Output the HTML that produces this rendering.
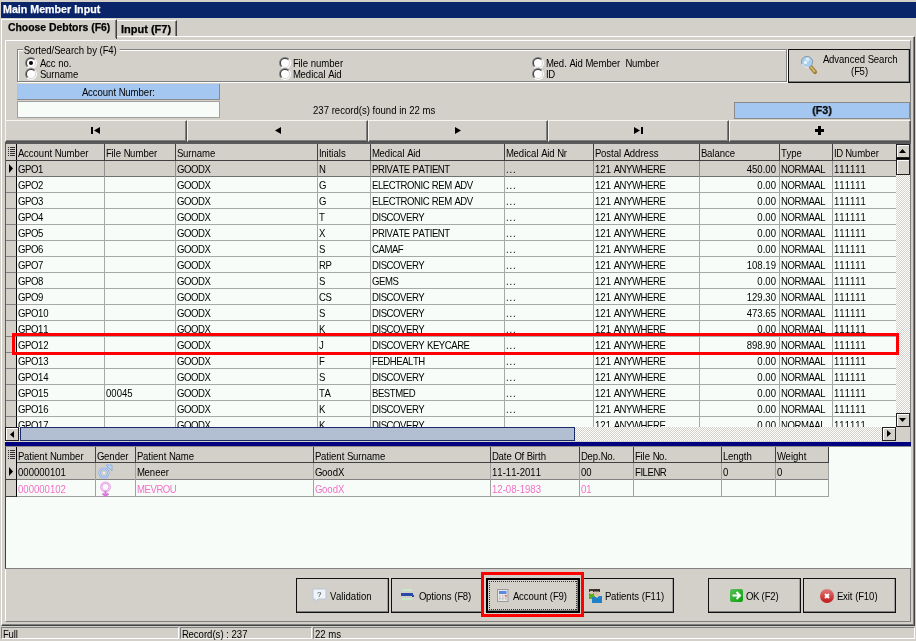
<!DOCTYPE html>
<html><head><meta charset="utf-8"><style>
html,body{margin:0;padding:0;}
body{width:916px;height:641px;overflow:hidden;position:relative;background:#D2D0C8;font-family:"Liberation Sans", sans-serif;font-size:11px;color:#000;font-kerning:none;will-change:transform;}
div,.t,svg{position:absolute;}
.u{font-style:normal;letter-spacing:-0.52px;}
.d{font-style:normal;letter-spacing:1px;}
.t{white-space:pre;line-height:13px;transform:scaleX(0.87);transform-origin:0 0;}
.b{font-weight:bold;transform:scaleX(0.97);-webkit-text-stroke:0.25px currentColor;}
.c{transform-origin:50% 0;}
.r{transform-origin:100% 0;}
</style></head><body>
<div style="left:1px;top:2px;width:915px;height:16px;background:#0A246A;"></div><span class="t b" style="left:3px;top:3px;color:#fff;">Main Member Input</span><div style="left:1px;top:36px;width:914px;height:590px;border-top:1px solid #fff;border-left:1px solid #fff;border-right:1px solid #404040;border-bottom:1px solid #404040;box-sizing:border-box;"></div><div style="left:2px;top:37px;width:912px;height:588px;border-right:1px solid #808080;border-bottom:1px solid #808080;box-sizing:border-box;"></div><div style="left:1px;top:19px;width:116px;height:20px;background:#D2D0C8;border-top:1px solid #fff;border-left:1px solid #fff;border-right:1px solid #404040;box-sizing:border-box;"></div><div style="left:115px;top:20px;width:1px;height:18px;background:#808080;"></div><span class="t b" style="left:8px;top:21px;transform:scaleX(0.945);">Choose Debtors (F6)</span><div style="left:117px;top:20px;width:60px;height:16px;background:#D2D0C8;border-top:1px solid #fff;border-right:1px solid #404040;box-sizing:border-box;"></div><div style="left:175px;top:21px;width:1px;height:15px;background:#808080;"></div><span class="t b" style="left:121px;top:23px;transform:scaleX(1.0);">Input (F7)</span><div style="left:5px;top:40px;width:906px;height:582px;border-top:1px solid #fff;border-left:1px solid #fff;border-right:1px solid #808080;border-bottom:1px solid #808080;box-sizing:border-box;"></div><div style="left:17px;top:49px;width:770px;height:33px;border:1px solid #808080;box-shadow:inset 1px 1px 0 #fff, 1px 1px 0 #fff;box-sizing:border-box;"></div><span class="t " style="left:23px;top:44px;background:#D2D0C8;padding-left:1px;"><i class="u">S</i>orted/<i class="u">S</i>earch by (<i class="u">F</i>4) </span><div style="left:25px;top:57px;width:12px;height:12px;border-radius:6px;background:linear-gradient(135deg,#808080 0%,#808080 45%,#fff 55%,#fff 100%);"><div style="left:1px;top:1px;width:10px;height:10px;border-radius:5px;background:linear-gradient(135deg,#404040 0%,#404040 45%,#D2D0C8 55%,#D2D0C8 100%);"><div style="left:1px;top:1px;width:8px;height:8px;border-radius:4px;background:#fff;"><div style="left:2px;top:2px;width:4px;height:4px;border-radius:2px;background:#000;"></div></div></div></div><span class="t " style="left:40px;top:57px;"><i class="u">A</i>cc no.</span><div style="left:25px;top:68px;width:12px;height:12px;border-radius:6px;background:linear-gradient(135deg,#808080 0%,#808080 45%,#fff 55%,#fff 100%);"><div style="left:1px;top:1px;width:10px;height:10px;border-radius:5px;background:linear-gradient(135deg,#404040 0%,#404040 45%,#D2D0C8 55%,#D2D0C8 100%);"><div style="left:1px;top:1px;width:8px;height:8px;border-radius:4px;background:#fff;"></div></div></div><span class="t " style="left:40px;top:68px;"><i class="u">S</i>urname</span><div style="left:279px;top:57px;width:12px;height:12px;border-radius:6px;background:linear-gradient(135deg,#808080 0%,#808080 45%,#fff 55%,#fff 100%);"><div style="left:1px;top:1px;width:10px;height:10px;border-radius:5px;background:linear-gradient(135deg,#404040 0%,#404040 45%,#D2D0C8 55%,#D2D0C8 100%);"><div style="left:1px;top:1px;width:8px;height:8px;border-radius:4px;background:#fff;"></div></div></div><span class="t " style="left:293px;top:57px;"><i class="u">F</i>ile number</span><div style="left:279px;top:68px;width:12px;height:12px;border-radius:6px;background:linear-gradient(135deg,#808080 0%,#808080 45%,#fff 55%,#fff 100%);"><div style="left:1px;top:1px;width:10px;height:10px;border-radius:5px;background:linear-gradient(135deg,#404040 0%,#404040 45%,#D2D0C8 55%,#D2D0C8 100%);"><div style="left:1px;top:1px;width:8px;height:8px;border-radius:4px;background:#fff;"></div></div></div><span class="t " style="left:293px;top:68px;"><i class="u">M</i>edical <i class="u">A</i>id</span><div style="left:532px;top:57px;width:12px;height:12px;border-radius:6px;background:linear-gradient(135deg,#808080 0%,#808080 45%,#fff 55%,#fff 100%);"><div style="left:1px;top:1px;width:10px;height:10px;border-radius:5px;background:linear-gradient(135deg,#404040 0%,#404040 45%,#D2D0C8 55%,#D2D0C8 100%);"><div style="left:1px;top:1px;width:8px;height:8px;border-radius:4px;background:#fff;"></div></div></div><span class="t " style="left:546px;top:57px;"><i class="u">M</i>ed. <i class="u">A</i>id <i class="u">M</i>ember&nbsp; <i class="u">N</i>umber</span><div style="left:532px;top:68px;width:12px;height:12px;border-radius:6px;background:linear-gradient(135deg,#808080 0%,#808080 45%,#fff 55%,#fff 100%);"><div style="left:1px;top:1px;width:10px;height:10px;border-radius:5px;background:linear-gradient(135deg,#404040 0%,#404040 45%,#D2D0C8 55%,#D2D0C8 100%);"><div style="left:1px;top:1px;width:8px;height:8px;border-radius:4px;background:#fff;"></div></div></div><span class="t " style="left:546px;top:68px;"><i class="u">ID</i></span><div style="left:788px;top:49px;width:122px;height:34px;background:#D2D0C8;border:1px solid #101010;box-shadow:inset 0 -1px 0 #808080, inset -1px 0 0 #a0a0a0;box-sizing:border-box;"></div><svg style="position:absolute;left:800px;top:55px" width="18" height="20" viewBox="0 0 18 20"><line x1="10" y1="11" x2="15" y2="17" stroke="#a08030" stroke-width="4.2" stroke-linecap="round"/><line x1="10" y1="11" x2="15" y2="17" stroke="#d8c080" stroke-width="1.6" stroke-linecap="round" stroke-dasharray="1 1"/><circle cx="7" cy="7" r="5.6" fill="#a8d0ec" stroke="#8a9aa8" stroke-width="1"/><path d="M2 9 A5.6 5.6 0 0 0 9 12.3" stroke="#e8e8e8" stroke-width="1.2" fill="none"/><circle cx="5.5" cy="7.5" r="1.6" fill="#f0f8ff"/><circle cx="7.5" cy="4.5" r="2" fill="#d8ecf8"/></svg><span class="t " style="left:823px;top:53px;"><i class="u">A</i>dvanced <i class="u">S</i>earch</span><span class="t " style="left:851px;top:65px;">(<i class="u">F</i>5)</span><div style="left:17px;top:84px;width:203px;height:16px;background:#A3C7F0;border-right:1px solid #8a8a8a;border-bottom:1px solid #8a8a8a;box-sizing:border-box;"></div><span class="t c" style="left:17px;top:86px;width:203px;text-align:center;"><i class="u">A</i>ccount <i class="u">N</i>umber:</span><div style="left:17px;top:101px;width:203px;height:17px;background:#F8FCF8;border:1px solid #a0a0a0;box-sizing:border-box;"></div><span class="t " style="left:313px;top:104px;">237 record(s) found in 22 ms</span><div style="left:734px;top:102px;width:176px;height:17px;background:#A3C7F0;border:1px solid #8a8a8a;box-sizing:border-box;"></div><span class="t b c" style="left:734px;top:104px;width:176px;text-align:center;">(F3)</span><div style="left:5px;top:120px;width:182px;height:22px;background:#D2D0C8;border-top:1px solid #f4f4f0;border-left:1px solid #f4f4f0;border-right:1px solid #505050;border-bottom:1px solid #505050;box-sizing:border-box;"><div style="left:0;top:0;width:180px;height:20px;border-right:1px solid #808080;border-bottom:1px solid #808080;box-sizing:border-box;"></div></div><div style="left:187px;top:120px;width:181px;height:22px;background:#D2D0C8;border-top:1px solid #f4f4f0;border-left:1px solid #f4f4f0;border-right:1px solid #505050;border-bottom:1px solid #505050;box-sizing:border-box;"><div style="left:0;top:0;width:179px;height:20px;border-right:1px solid #808080;border-bottom:1px solid #808080;box-sizing:border-box;"></div></div><div style="left:368px;top:120px;width:180px;height:22px;background:#D2D0C8;border-top:1px solid #f4f4f0;border-left:1px solid #f4f4f0;border-right:1px solid #505050;border-bottom:1px solid #505050;box-sizing:border-box;"><div style="left:0;top:0;width:178px;height:20px;border-right:1px solid #808080;border-bottom:1px solid #808080;box-sizing:border-box;"></div></div><div style="left:548px;top:120px;width:181px;height:22px;background:#D2D0C8;border-top:1px solid #f4f4f0;border-left:1px solid #f4f4f0;border-right:1px solid #505050;border-bottom:1px solid #505050;box-sizing:border-box;"><div style="left:0;top:0;width:179px;height:20px;border-right:1px solid #808080;border-bottom:1px solid #808080;box-sizing:border-box;"></div></div><div style="left:729px;top:120px;width:182px;height:22px;background:#D2D0C8;border-top:1px solid #f4f4f0;border-left:1px solid #f4f4f0;border-right:1px solid #505050;border-bottom:1px solid #505050;box-sizing:border-box;"><div style="left:0;top:0;width:180px;height:20px;border-right:1px solid #808080;border-bottom:1px solid #808080;box-sizing:border-box;"></div></div><svg style="position:absolute;left:91px;top:127px" width="10" height="8"><rect x="0" y="0" width="2" height="7" fill="#000"/><path d="M9 0 L3 3.5 L9 7 Z" fill="#000"/></svg><svg style="position:absolute;left:274px;top:127px" width="8" height="8"><path d="M7 0 L1 3.5 L7 7 Z" fill="#000"/></svg><svg style="position:absolute;left:454px;top:127px" width="8" height="8"><path d="M1 0 L7 3.5 L1 7 Z" fill="#000"/></svg><svg style="position:absolute;left:634px;top:127px" width="10" height="8"><path d="M0 0 L6 3.5 L0 7 Z" fill="#000"/><rect x="7" y="0" width="2" height="7" fill="#000"/></svg><svg style="position:absolute;left:815px;top:126px" width="9" height="9"><rect x="3" y="0" width="3" height="9" fill="#000"/><rect x="0" y="3" width="9" height="3" fill="#000"/></svg><div style="left:5px;top:142px;width:906px;height:2px;background:#5a5a5a;"></div><div style="left:5px;top:142px;width:1px;height:299px;background:#5a5a5a;"></div><div style="left:6px;top:144px;width:890px;height:283px;overflow:hidden;background:#F8FCF8;"><div style="left:0;top:0;width:891px;height:16px;background:#D2D0C8;border-bottom:2px solid #404040;box-sizing:content-box;"></div><div style="left:0;top:0;width:11px;height:16px;background:#D2D0C8;border-right:1px solid #000;box-sizing:border-box;"></div><svg style="position:absolute;left:2px;top:3px" width="8" height="10"><g fill="#303030"><rect x="0" y="0" width="1" height="1"/><rect x="2" y="0" width="5" height="1"/><rect x="0" y="2" width="1" height="1"/><rect x="2" y="2" width="5" height="1"/><rect x="0" y="4" width="1" height="1"/><rect x="2" y="4" width="5" height="1"/><rect x="0" y="6" width="1" height="1"/><rect x="2" y="6" width="5" height="1"/><rect x="0" y="8" width="1" height="1"/><rect x="2" y="8" width="5" height="1"/></g></svg><div style="left:10px;top:0;width:89px;height:16px;border-right:1px solid #404040;box-sizing:border-box;"></div><span class="t" style="left:12px;top:3px;"><i class="u">A</i>ccount <i class="u">N</i>umber</span><div style="left:98px;top:0;width:72px;height:16px;border-right:1px solid #404040;box-sizing:border-box;"></div><span class="t" style="left:100px;top:3px;"><i class="u">F</i>ile <i class="u">N</i>umber</span><div style="left:169px;top:0;width:143px;height:16px;border-right:1px solid #404040;box-sizing:border-box;"></div><span class="t" style="left:171px;top:3px;"><i class="u">S</i>urname</span><div style="left:311px;top:0;width:54px;height:16px;border-right:1px solid #404040;box-sizing:border-box;"></div><span class="t" style="left:313px;top:3px;"><i class="u">I</i>nitials</span><div style="left:364px;top:0;width:135px;height:16px;border-right:1px solid #404040;box-sizing:border-box;"></div><span class="t" style="left:366px;top:3px;"><i class="u">M</i>edical <i class="u">A</i>id</span><div style="left:498px;top:0;width:90px;height:16px;border-right:1px solid #404040;box-sizing:border-box;"></div><span class="t" style="left:500px;top:3px;"><i class="u">M</i>edical <i class="u">A</i>id <i class="u">N</i>r</span><div style="left:587px;top:0;width:107px;height:16px;border-right:1px solid #404040;box-sizing:border-box;"></div><span class="t" style="left:589px;top:3px;"><i class="u">P</i>ostal <i class="u">A</i>ddress</span><div style="left:693px;top:0;width:81px;height:16px;border-right:1px solid #404040;box-sizing:border-box;"></div><span class="t" style="left:695px;top:3px;"><i class="u">B</i>alance</span><div style="left:773px;top:0;width:54px;height:16px;border-right:1px solid #404040;box-sizing:border-box;"></div><span class="t" style="left:775px;top:3px;"><i class="u">T</i>ype</span><div style="left:826px;top:0;width:65px;height:16px;border-right:1px solid #404040;box-sizing:border-box;"></div><span class="t" style="left:828px;top:3px;"><i class="u">ID</i> <i class="u">N</i>umber</span><div style="left:10px;top:17px;width:880px;height:16px;background:#D2D0C8;border-bottom:1px solid #707070;box-sizing:border-box;"></div><div style="left:0;top:17px;width:11px;height:16px;background:#D2D0C8;border-right:1px solid #000;border-bottom:1px solid #808080;box-sizing:border-box;"></div><svg style="position:absolute;left:2px;top:20px" width="6" height="10"><path d="M1 0 L5 4.5 L1 9 Z" fill="#000"/></svg><div style="left:10px;top:17px;width:89px;height:16px;border-right:1px solid #909090;box-sizing:border-box;"></div><span class="t" style="left:12px;top:19px;"><i class="u">GPO</i>1</span><div style="left:98px;top:17px;width:72px;height:16px;border-right:1px solid #909090;box-sizing:border-box;"></div><div style="left:169px;top:17px;width:143px;height:16px;border-right:1px solid #909090;box-sizing:border-box;"></div><span class="t" style="left:171px;top:19px;"><i class="u">GOODX</i></span><div style="left:311px;top:17px;width:54px;height:16px;border-right:1px solid #909090;box-sizing:border-box;"></div><span class="t" style="left:313px;top:19px;"><i class="u">N</i></span><div style="left:364px;top:17px;width:135px;height:16px;border-right:1px solid #909090;box-sizing:border-box;"></div><span class="t" style="left:366px;top:19px;"><i class="u">PRIVATE</i> <i class="u">PATIENT</i></span><div style="left:498px;top:17px;width:90px;height:16px;border-right:1px solid #909090;box-sizing:border-box;"></div><span class="t" style="left:500px;top:19px;"><i class="d">...</i></span><div style="left:587px;top:17px;width:107px;height:16px;border-right:1px solid #909090;box-sizing:border-box;"></div><span class="t" style="left:589px;top:19px;">121 <i class="u">ANYWHERE</i></span><div style="left:693px;top:17px;width:81px;height:16px;border-right:1px solid #909090;box-sizing:border-box;"></div><span class="t r" style="left:693px;top:19px;width:77px;text-align:right;">450.00</span><div style="left:773px;top:17px;width:54px;height:16px;border-right:1px solid #909090;box-sizing:border-box;"></div><span class="t" style="left:775px;top:19px;"><i class="u">NORMAAL</i></span><div style="left:826px;top:17px;width:65px;height:16px;border-right:1px solid #909090;box-sizing:border-box;"></div><span class="t" style="left:828px;top:19px;">111111</span><div style="left:10px;top:33px;width:880px;height:16px;background:#F8FCF8;border-bottom:1px solid #A8A8A8;box-sizing:border-box;"></div><div style="left:0;top:33px;width:11px;height:16px;background:#D2D0C8;border-right:1px solid #000;border-bottom:1px solid #808080;box-sizing:border-box;"></div><div style="left:10px;top:33px;width:89px;height:16px;border-right:1px solid #A8A8A8;box-sizing:border-box;"></div><span class="t" style="left:12px;top:35px;"><i class="u">GPO</i>2</span><div style="left:98px;top:33px;width:72px;height:16px;border-right:1px solid #A8A8A8;box-sizing:border-box;"></div><div style="left:169px;top:33px;width:143px;height:16px;border-right:1px solid #A8A8A8;box-sizing:border-box;"></div><span class="t" style="left:171px;top:35px;"><i class="u">GOODX</i></span><div style="left:311px;top:33px;width:54px;height:16px;border-right:1px solid #A8A8A8;box-sizing:border-box;"></div><span class="t" style="left:313px;top:35px;"><i class="u">G</i></span><div style="left:364px;top:33px;width:135px;height:16px;border-right:1px solid #A8A8A8;box-sizing:border-box;"></div><span class="t" style="left:366px;top:35px;"><i class="u">ELECTRONIC</i> <i class="u">REM</i> <i class="u">ADV</i></span><div style="left:498px;top:33px;width:90px;height:16px;border-right:1px solid #A8A8A8;box-sizing:border-box;"></div><span class="t" style="left:500px;top:35px;"><i class="d">...</i></span><div style="left:587px;top:33px;width:107px;height:16px;border-right:1px solid #A8A8A8;box-sizing:border-box;"></div><span class="t" style="left:589px;top:35px;">121 <i class="u">ANYWHERE</i></span><div style="left:693px;top:33px;width:81px;height:16px;border-right:1px solid #A8A8A8;box-sizing:border-box;"></div><span class="t r" style="left:693px;top:35px;width:77px;text-align:right;">0.00</span><div style="left:773px;top:33px;width:54px;height:16px;border-right:1px solid #A8A8A8;box-sizing:border-box;"></div><span class="t" style="left:775px;top:35px;"><i class="u">NORMAAL</i></span><div style="left:826px;top:33px;width:65px;height:16px;border-right:1px solid #A8A8A8;box-sizing:border-box;"></div><span class="t" style="left:828px;top:35px;">111111</span><div style="left:10px;top:49px;width:880px;height:16px;background:#F8FCF8;border-bottom:1px solid #A8A8A8;box-sizing:border-box;"></div><div style="left:0;top:49px;width:11px;height:16px;background:#D2D0C8;border-right:1px solid #000;border-bottom:1px solid #808080;box-sizing:border-box;"></div><div style="left:10px;top:49px;width:89px;height:16px;border-right:1px solid #A8A8A8;box-sizing:border-box;"></div><span class="t" style="left:12px;top:51px;"><i class="u">GPO</i>3</span><div style="left:98px;top:49px;width:72px;height:16px;border-right:1px solid #A8A8A8;box-sizing:border-box;"></div><div style="left:169px;top:49px;width:143px;height:16px;border-right:1px solid #A8A8A8;box-sizing:border-box;"></div><span class="t" style="left:171px;top:51px;"><i class="u">GOODX</i></span><div style="left:311px;top:49px;width:54px;height:16px;border-right:1px solid #A8A8A8;box-sizing:border-box;"></div><span class="t" style="left:313px;top:51px;"><i class="u">G</i></span><div style="left:364px;top:49px;width:135px;height:16px;border-right:1px solid #A8A8A8;box-sizing:border-box;"></div><span class="t" style="left:366px;top:51px;"><i class="u">ELECTRONIC</i> <i class="u">REM</i> <i class="u">ADV</i></span><div style="left:498px;top:49px;width:90px;height:16px;border-right:1px solid #A8A8A8;box-sizing:border-box;"></div><span class="t" style="left:500px;top:51px;"><i class="d">...</i></span><div style="left:587px;top:49px;width:107px;height:16px;border-right:1px solid #A8A8A8;box-sizing:border-box;"></div><span class="t" style="left:589px;top:51px;">121 <i class="u">ANYWHERE</i></span><div style="left:693px;top:49px;width:81px;height:16px;border-right:1px solid #A8A8A8;box-sizing:border-box;"></div><span class="t r" style="left:693px;top:51px;width:77px;text-align:right;">0.00</span><div style="left:773px;top:49px;width:54px;height:16px;border-right:1px solid #A8A8A8;box-sizing:border-box;"></div><span class="t" style="left:775px;top:51px;"><i class="u">NORMAAL</i></span><div style="left:826px;top:49px;width:65px;height:16px;border-right:1px solid #A8A8A8;box-sizing:border-box;"></div><span class="t" style="left:828px;top:51px;">111111</span><div style="left:10px;top:65px;width:880px;height:16px;background:#F8FCF8;border-bottom:1px solid #A8A8A8;box-sizing:border-box;"></div><div style="left:0;top:65px;width:11px;height:16px;background:#D2D0C8;border-right:1px solid #000;border-bottom:1px solid #808080;box-sizing:border-box;"></div><div style="left:10px;top:65px;width:89px;height:16px;border-right:1px solid #A8A8A8;box-sizing:border-box;"></div><span class="t" style="left:12px;top:67px;"><i class="u">GPO</i>4</span><div style="left:98px;top:65px;width:72px;height:16px;border-right:1px solid #A8A8A8;box-sizing:border-box;"></div><div style="left:169px;top:65px;width:143px;height:16px;border-right:1px solid #A8A8A8;box-sizing:border-box;"></div><span class="t" style="left:171px;top:67px;"><i class="u">GOODX</i></span><div style="left:311px;top:65px;width:54px;height:16px;border-right:1px solid #A8A8A8;box-sizing:border-box;"></div><span class="t" style="left:313px;top:67px;"><i class="u">T</i></span><div style="left:364px;top:65px;width:135px;height:16px;border-right:1px solid #A8A8A8;box-sizing:border-box;"></div><span class="t" style="left:366px;top:67px;"><i class="u">DISCOVERY</i></span><div style="left:498px;top:65px;width:90px;height:16px;border-right:1px solid #A8A8A8;box-sizing:border-box;"></div><span class="t" style="left:500px;top:67px;"><i class="d">...</i></span><div style="left:587px;top:65px;width:107px;height:16px;border-right:1px solid #A8A8A8;box-sizing:border-box;"></div><span class="t" style="left:589px;top:67px;">121 <i class="u">ANYWHERE</i></span><div style="left:693px;top:65px;width:81px;height:16px;border-right:1px solid #A8A8A8;box-sizing:border-box;"></div><span class="t r" style="left:693px;top:67px;width:77px;text-align:right;">0.00</span><div style="left:773px;top:65px;width:54px;height:16px;border-right:1px solid #A8A8A8;box-sizing:border-box;"></div><span class="t" style="left:775px;top:67px;"><i class="u">NORMAAL</i></span><div style="left:826px;top:65px;width:65px;height:16px;border-right:1px solid #A8A8A8;box-sizing:border-box;"></div><span class="t" style="left:828px;top:67px;">111111</span><div style="left:10px;top:81px;width:880px;height:16px;background:#F8FCF8;border-bottom:1px solid #A8A8A8;box-sizing:border-box;"></div><div style="left:0;top:81px;width:11px;height:16px;background:#D2D0C8;border-right:1px solid #000;border-bottom:1px solid #808080;box-sizing:border-box;"></div><div style="left:10px;top:81px;width:89px;height:16px;border-right:1px solid #A8A8A8;box-sizing:border-box;"></div><span class="t" style="left:12px;top:83px;"><i class="u">GPO</i>5</span><div style="left:98px;top:81px;width:72px;height:16px;border-right:1px solid #A8A8A8;box-sizing:border-box;"></div><div style="left:169px;top:81px;width:143px;height:16px;border-right:1px solid #A8A8A8;box-sizing:border-box;"></div><span class="t" style="left:171px;top:83px;"><i class="u">GOODX</i></span><div style="left:311px;top:81px;width:54px;height:16px;border-right:1px solid #A8A8A8;box-sizing:border-box;"></div><span class="t" style="left:313px;top:83px;"><i class="u">X</i></span><div style="left:364px;top:81px;width:135px;height:16px;border-right:1px solid #A8A8A8;box-sizing:border-box;"></div><span class="t" style="left:366px;top:83px;"><i class="u">PRIVATE</i> <i class="u">PATIENT</i></span><div style="left:498px;top:81px;width:90px;height:16px;border-right:1px solid #A8A8A8;box-sizing:border-box;"></div><span class="t" style="left:500px;top:83px;"><i class="d">...</i></span><div style="left:587px;top:81px;width:107px;height:16px;border-right:1px solid #A8A8A8;box-sizing:border-box;"></div><span class="t" style="left:589px;top:83px;">121 <i class="u">ANYWHERE</i></span><div style="left:693px;top:81px;width:81px;height:16px;border-right:1px solid #A8A8A8;box-sizing:border-box;"></div><span class="t r" style="left:693px;top:83px;width:77px;text-align:right;">0.00</span><div style="left:773px;top:81px;width:54px;height:16px;border-right:1px solid #A8A8A8;box-sizing:border-box;"></div><span class="t" style="left:775px;top:83px;"><i class="u">NORMAAL</i></span><div style="left:826px;top:81px;width:65px;height:16px;border-right:1px solid #A8A8A8;box-sizing:border-box;"></div><span class="t" style="left:828px;top:83px;">111111</span><div style="left:10px;top:97px;width:880px;height:16px;background:#F8FCF8;border-bottom:1px solid #A8A8A8;box-sizing:border-box;"></div><div style="left:0;top:97px;width:11px;height:16px;background:#D2D0C8;border-right:1px solid #000;border-bottom:1px solid #808080;box-sizing:border-box;"></div><div style="left:10px;top:97px;width:89px;height:16px;border-right:1px solid #A8A8A8;box-sizing:border-box;"></div><span class="t" style="left:12px;top:99px;"><i class="u">GPO</i>6</span><div style="left:98px;top:97px;width:72px;height:16px;border-right:1px solid #A8A8A8;box-sizing:border-box;"></div><div style="left:169px;top:97px;width:143px;height:16px;border-right:1px solid #A8A8A8;box-sizing:border-box;"></div><span class="t" style="left:171px;top:99px;"><i class="u">GOODX</i></span><div style="left:311px;top:97px;width:54px;height:16px;border-right:1px solid #A8A8A8;box-sizing:border-box;"></div><span class="t" style="left:313px;top:99px;"><i class="u">S</i></span><div style="left:364px;top:97px;width:135px;height:16px;border-right:1px solid #A8A8A8;box-sizing:border-box;"></div><span class="t" style="left:366px;top:99px;"><i class="u">CAMAF</i></span><div style="left:498px;top:97px;width:90px;height:16px;border-right:1px solid #A8A8A8;box-sizing:border-box;"></div><span class="t" style="left:500px;top:99px;"><i class="d">...</i></span><div style="left:587px;top:97px;width:107px;height:16px;border-right:1px solid #A8A8A8;box-sizing:border-box;"></div><span class="t" style="left:589px;top:99px;">121 <i class="u">ANYWHERE</i></span><div style="left:693px;top:97px;width:81px;height:16px;border-right:1px solid #A8A8A8;box-sizing:border-box;"></div><span class="t r" style="left:693px;top:99px;width:77px;text-align:right;">0.00</span><div style="left:773px;top:97px;width:54px;height:16px;border-right:1px solid #A8A8A8;box-sizing:border-box;"></div><span class="t" style="left:775px;top:99px;"><i class="u">NORMAAL</i></span><div style="left:826px;top:97px;width:65px;height:16px;border-right:1px solid #A8A8A8;box-sizing:border-box;"></div><span class="t" style="left:828px;top:99px;">111111</span><div style="left:10px;top:113px;width:880px;height:16px;background:#F8FCF8;border-bottom:1px solid #A8A8A8;box-sizing:border-box;"></div><div style="left:0;top:113px;width:11px;height:16px;background:#D2D0C8;border-right:1px solid #000;border-bottom:1px solid #808080;box-sizing:border-box;"></div><div style="left:10px;top:113px;width:89px;height:16px;border-right:1px solid #A8A8A8;box-sizing:border-box;"></div><span class="t" style="left:12px;top:115px;"><i class="u">GPO</i>7</span><div style="left:98px;top:113px;width:72px;height:16px;border-right:1px solid #A8A8A8;box-sizing:border-box;"></div><div style="left:169px;top:113px;width:143px;height:16px;border-right:1px solid #A8A8A8;box-sizing:border-box;"></div><span class="t" style="left:171px;top:115px;"><i class="u">GOODX</i></span><div style="left:311px;top:113px;width:54px;height:16px;border-right:1px solid #A8A8A8;box-sizing:border-box;"></div><span class="t" style="left:313px;top:115px;"><i class="u">RP</i></span><div style="left:364px;top:113px;width:135px;height:16px;border-right:1px solid #A8A8A8;box-sizing:border-box;"></div><span class="t" style="left:366px;top:115px;"><i class="u">DISCOVERY</i></span><div style="left:498px;top:113px;width:90px;height:16px;border-right:1px solid #A8A8A8;box-sizing:border-box;"></div><span class="t" style="left:500px;top:115px;"><i class="d">...</i></span><div style="left:587px;top:113px;width:107px;height:16px;border-right:1px solid #A8A8A8;box-sizing:border-box;"></div><span class="t" style="left:589px;top:115px;">121 <i class="u">ANYWHERE</i></span><div style="left:693px;top:113px;width:81px;height:16px;border-right:1px solid #A8A8A8;box-sizing:border-box;"></div><span class="t r" style="left:693px;top:115px;width:77px;text-align:right;">108.19</span><div style="left:773px;top:113px;width:54px;height:16px;border-right:1px solid #A8A8A8;box-sizing:border-box;"></div><span class="t" style="left:775px;top:115px;"><i class="u">NORMAAL</i></span><div style="left:826px;top:113px;width:65px;height:16px;border-right:1px solid #A8A8A8;box-sizing:border-box;"></div><span class="t" style="left:828px;top:115px;">111111</span><div style="left:10px;top:129px;width:880px;height:16px;background:#F8FCF8;border-bottom:1px solid #A8A8A8;box-sizing:border-box;"></div><div style="left:0;top:129px;width:11px;height:16px;background:#D2D0C8;border-right:1px solid #000;border-bottom:1px solid #808080;box-sizing:border-box;"></div><div style="left:10px;top:129px;width:89px;height:16px;border-right:1px solid #A8A8A8;box-sizing:border-box;"></div><span class="t" style="left:12px;top:131px;"><i class="u">GPO</i>8</span><div style="left:98px;top:129px;width:72px;height:16px;border-right:1px solid #A8A8A8;box-sizing:border-box;"></div><div style="left:169px;top:129px;width:143px;height:16px;border-right:1px solid #A8A8A8;box-sizing:border-box;"></div><span class="t" style="left:171px;top:131px;"><i class="u">GOODX</i></span><div style="left:311px;top:129px;width:54px;height:16px;border-right:1px solid #A8A8A8;box-sizing:border-box;"></div><span class="t" style="left:313px;top:131px;"><i class="u">S</i></span><div style="left:364px;top:129px;width:135px;height:16px;border-right:1px solid #A8A8A8;box-sizing:border-box;"></div><span class="t" style="left:366px;top:131px;"><i class="u">GEMS</i></span><div style="left:498px;top:129px;width:90px;height:16px;border-right:1px solid #A8A8A8;box-sizing:border-box;"></div><span class="t" style="left:500px;top:131px;"><i class="d">...</i></span><div style="left:587px;top:129px;width:107px;height:16px;border-right:1px solid #A8A8A8;box-sizing:border-box;"></div><span class="t" style="left:589px;top:131px;">121 <i class="u">ANYWHERE</i></span><div style="left:693px;top:129px;width:81px;height:16px;border-right:1px solid #A8A8A8;box-sizing:border-box;"></div><span class="t r" style="left:693px;top:131px;width:77px;text-align:right;">0.00</span><div style="left:773px;top:129px;width:54px;height:16px;border-right:1px solid #A8A8A8;box-sizing:border-box;"></div><span class="t" style="left:775px;top:131px;"><i class="u">NORMAAL</i></span><div style="left:826px;top:129px;width:65px;height:16px;border-right:1px solid #A8A8A8;box-sizing:border-box;"></div><span class="t" style="left:828px;top:131px;">111111</span><div style="left:10px;top:145px;width:880px;height:16px;background:#F8FCF8;border-bottom:1px solid #A8A8A8;box-sizing:border-box;"></div><div style="left:0;top:145px;width:11px;height:16px;background:#D2D0C8;border-right:1px solid #000;border-bottom:1px solid #808080;box-sizing:border-box;"></div><div style="left:10px;top:145px;width:89px;height:16px;border-right:1px solid #A8A8A8;box-sizing:border-box;"></div><span class="t" style="left:12px;top:147px;"><i class="u">GPO</i>9</span><div style="left:98px;top:145px;width:72px;height:16px;border-right:1px solid #A8A8A8;box-sizing:border-box;"></div><div style="left:169px;top:145px;width:143px;height:16px;border-right:1px solid #A8A8A8;box-sizing:border-box;"></div><span class="t" style="left:171px;top:147px;"><i class="u">GOODX</i></span><div style="left:311px;top:145px;width:54px;height:16px;border-right:1px solid #A8A8A8;box-sizing:border-box;"></div><span class="t" style="left:313px;top:147px;"><i class="u">CS</i></span><div style="left:364px;top:145px;width:135px;height:16px;border-right:1px solid #A8A8A8;box-sizing:border-box;"></div><span class="t" style="left:366px;top:147px;"><i class="u">DISCOVERY</i></span><div style="left:498px;top:145px;width:90px;height:16px;border-right:1px solid #A8A8A8;box-sizing:border-box;"></div><span class="t" style="left:500px;top:147px;"><i class="d">...</i></span><div style="left:587px;top:145px;width:107px;height:16px;border-right:1px solid #A8A8A8;box-sizing:border-box;"></div><span class="t" style="left:589px;top:147px;">121 <i class="u">ANYWHERE</i></span><div style="left:693px;top:145px;width:81px;height:16px;border-right:1px solid #A8A8A8;box-sizing:border-box;"></div><span class="t r" style="left:693px;top:147px;width:77px;text-align:right;">129.30</span><div style="left:773px;top:145px;width:54px;height:16px;border-right:1px solid #A8A8A8;box-sizing:border-box;"></div><span class="t" style="left:775px;top:147px;"><i class="u">NORMAAL</i></span><div style="left:826px;top:145px;width:65px;height:16px;border-right:1px solid #A8A8A8;box-sizing:border-box;"></div><span class="t" style="left:828px;top:147px;">111111</span><div style="left:10px;top:161px;width:880px;height:16px;background:#F8FCF8;border-bottom:1px solid #A8A8A8;box-sizing:border-box;"></div><div style="left:0;top:161px;width:11px;height:16px;background:#D2D0C8;border-right:1px solid #000;border-bottom:1px solid #808080;box-sizing:border-box;"></div><div style="left:10px;top:161px;width:89px;height:16px;border-right:1px solid #A8A8A8;box-sizing:border-box;"></div><span class="t" style="left:12px;top:163px;"><i class="u">GPO</i>10</span><div style="left:98px;top:161px;width:72px;height:16px;border-right:1px solid #A8A8A8;box-sizing:border-box;"></div><div style="left:169px;top:161px;width:143px;height:16px;border-right:1px solid #A8A8A8;box-sizing:border-box;"></div><span class="t" style="left:171px;top:163px;"><i class="u">GOODX</i></span><div style="left:311px;top:161px;width:54px;height:16px;border-right:1px solid #A8A8A8;box-sizing:border-box;"></div><span class="t" style="left:313px;top:163px;"><i class="u">S</i></span><div style="left:364px;top:161px;width:135px;height:16px;border-right:1px solid #A8A8A8;box-sizing:border-box;"></div><span class="t" style="left:366px;top:163px;"><i class="u">DISCOVERY</i></span><div style="left:498px;top:161px;width:90px;height:16px;border-right:1px solid #A8A8A8;box-sizing:border-box;"></div><span class="t" style="left:500px;top:163px;"><i class="d">...</i></span><div style="left:587px;top:161px;width:107px;height:16px;border-right:1px solid #A8A8A8;box-sizing:border-box;"></div><span class="t" style="left:589px;top:163px;">121 <i class="u">ANYWHERE</i></span><div style="left:693px;top:161px;width:81px;height:16px;border-right:1px solid #A8A8A8;box-sizing:border-box;"></div><span class="t r" style="left:693px;top:163px;width:77px;text-align:right;">473.65</span><div style="left:773px;top:161px;width:54px;height:16px;border-right:1px solid #A8A8A8;box-sizing:border-box;"></div><span class="t" style="left:775px;top:163px;"><i class="u">NORMAAL</i></span><div style="left:826px;top:161px;width:65px;height:16px;border-right:1px solid #A8A8A8;box-sizing:border-box;"></div><span class="t" style="left:828px;top:163px;">111111</span><div style="left:10px;top:177px;width:880px;height:16px;background:#F8FCF8;border-bottom:1px solid #A8A8A8;box-sizing:border-box;"></div><div style="left:0;top:177px;width:11px;height:16px;background:#D2D0C8;border-right:1px solid #000;border-bottom:1px solid #808080;box-sizing:border-box;"></div><div style="left:10px;top:177px;width:89px;height:16px;border-right:1px solid #A8A8A8;box-sizing:border-box;"></div><span class="t" style="left:12px;top:179px;"><i class="u">GPO</i>11</span><div style="left:98px;top:177px;width:72px;height:16px;border-right:1px solid #A8A8A8;box-sizing:border-box;"></div><div style="left:169px;top:177px;width:143px;height:16px;border-right:1px solid #A8A8A8;box-sizing:border-box;"></div><span class="t" style="left:171px;top:179px;"><i class="u">GOODX</i></span><div style="left:311px;top:177px;width:54px;height:16px;border-right:1px solid #A8A8A8;box-sizing:border-box;"></div><span class="t" style="left:313px;top:179px;"><i class="u">K</i></span><div style="left:364px;top:177px;width:135px;height:16px;border-right:1px solid #A8A8A8;box-sizing:border-box;"></div><span class="t" style="left:366px;top:179px;"><i class="u">DISCOVERY</i></span><div style="left:498px;top:177px;width:90px;height:16px;border-right:1px solid #A8A8A8;box-sizing:border-box;"></div><span class="t" style="left:500px;top:179px;"><i class="d">...</i></span><div style="left:587px;top:177px;width:107px;height:16px;border-right:1px solid #A8A8A8;box-sizing:border-box;"></div><span class="t" style="left:589px;top:179px;">121 <i class="u">ANYWHERE</i></span><div style="left:693px;top:177px;width:81px;height:16px;border-right:1px solid #A8A8A8;box-sizing:border-box;"></div><span class="t r" style="left:693px;top:179px;width:77px;text-align:right;">0.00</span><div style="left:773px;top:177px;width:54px;height:16px;border-right:1px solid #A8A8A8;box-sizing:border-box;"></div><span class="t" style="left:775px;top:179px;"><i class="u">NORMAAL</i></span><div style="left:826px;top:177px;width:65px;height:16px;border-right:1px solid #A8A8A8;box-sizing:border-box;"></div><span class="t" style="left:828px;top:179px;">111111</span><div style="left:10px;top:193px;width:880px;height:16px;background:#F8FCF8;border-bottom:1px solid #A8A8A8;box-sizing:border-box;"></div><div style="left:0;top:193px;width:11px;height:16px;background:#D2D0C8;border-right:1px solid #000;border-bottom:1px solid #808080;box-sizing:border-box;"></div><div style="left:10px;top:193px;width:89px;height:16px;border-right:1px solid #A8A8A8;box-sizing:border-box;"></div><span class="t" style="left:12px;top:195px;"><i class="u">GPO</i>12</span><div style="left:98px;top:193px;width:72px;height:16px;border-right:1px solid #A8A8A8;box-sizing:border-box;"></div><div style="left:169px;top:193px;width:143px;height:16px;border-right:1px solid #A8A8A8;box-sizing:border-box;"></div><span class="t" style="left:171px;top:195px;"><i class="u">GOODX</i></span><div style="left:311px;top:193px;width:54px;height:16px;border-right:1px solid #A8A8A8;box-sizing:border-box;"></div><span class="t" style="left:313px;top:195px;"><i class="u">J</i></span><div style="left:364px;top:193px;width:135px;height:16px;border-right:1px solid #A8A8A8;box-sizing:border-box;"></div><span class="t" style="left:366px;top:195px;"><i class="u">DISCOVERY</i> <i class="u">KEYCARE</i></span><div style="left:498px;top:193px;width:90px;height:16px;border-right:1px solid #A8A8A8;box-sizing:border-box;"></div><span class="t" style="left:500px;top:195px;"><i class="d">...</i></span><div style="left:587px;top:193px;width:107px;height:16px;border-right:1px solid #A8A8A8;box-sizing:border-box;"></div><span class="t" style="left:589px;top:195px;">121 <i class="u">ANYWHERE</i></span><div style="left:693px;top:193px;width:81px;height:16px;border-right:1px solid #A8A8A8;box-sizing:border-box;"></div><span class="t r" style="left:693px;top:195px;width:77px;text-align:right;">898.90</span><div style="left:773px;top:193px;width:54px;height:16px;border-right:1px solid #A8A8A8;box-sizing:border-box;"></div><span class="t" style="left:775px;top:195px;"><i class="u">NORMAAL</i></span><div style="left:826px;top:193px;width:65px;height:16px;border-right:1px solid #A8A8A8;box-sizing:border-box;"></div><span class="t" style="left:828px;top:195px;">111111</span><div style="left:10px;top:209px;width:880px;height:16px;background:#F8FCF8;border-bottom:1px solid #A8A8A8;box-sizing:border-box;"></div><div style="left:0;top:209px;width:11px;height:16px;background:#D2D0C8;border-right:1px solid #000;border-bottom:1px solid #808080;box-sizing:border-box;"></div><div style="left:10px;top:209px;width:89px;height:16px;border-right:1px solid #A8A8A8;box-sizing:border-box;"></div><span class="t" style="left:12px;top:211px;"><i class="u">GPO</i>13</span><div style="left:98px;top:209px;width:72px;height:16px;border-right:1px solid #A8A8A8;box-sizing:border-box;"></div><div style="left:169px;top:209px;width:143px;height:16px;border-right:1px solid #A8A8A8;box-sizing:border-box;"></div><span class="t" style="left:171px;top:211px;"><i class="u">GOODX</i></span><div style="left:311px;top:209px;width:54px;height:16px;border-right:1px solid #A8A8A8;box-sizing:border-box;"></div><span class="t" style="left:313px;top:211px;"><i class="u">F</i></span><div style="left:364px;top:209px;width:135px;height:16px;border-right:1px solid #A8A8A8;box-sizing:border-box;"></div><span class="t" style="left:366px;top:211px;"><i class="u">FEDHEALTH</i></span><div style="left:498px;top:209px;width:90px;height:16px;border-right:1px solid #A8A8A8;box-sizing:border-box;"></div><span class="t" style="left:500px;top:211px;"><i class="d">...</i></span><div style="left:587px;top:209px;width:107px;height:16px;border-right:1px solid #A8A8A8;box-sizing:border-box;"></div><span class="t" style="left:589px;top:211px;">121 <i class="u">ANYWHERE</i></span><div style="left:693px;top:209px;width:81px;height:16px;border-right:1px solid #A8A8A8;box-sizing:border-box;"></div><span class="t r" style="left:693px;top:211px;width:77px;text-align:right;">0.00</span><div style="left:773px;top:209px;width:54px;height:16px;border-right:1px solid #A8A8A8;box-sizing:border-box;"></div><span class="t" style="left:775px;top:211px;"><i class="u">NORMAAL</i></span><div style="left:826px;top:209px;width:65px;height:16px;border-right:1px solid #A8A8A8;box-sizing:border-box;"></div><span class="t" style="left:828px;top:211px;">111111</span><div style="left:10px;top:225px;width:880px;height:16px;background:#F8FCF8;border-bottom:1px solid #A8A8A8;box-sizing:border-box;"></div><div style="left:0;top:225px;width:11px;height:16px;background:#D2D0C8;border-right:1px solid #000;border-bottom:1px solid #808080;box-sizing:border-box;"></div><div style="left:10px;top:225px;width:89px;height:16px;border-right:1px solid #A8A8A8;box-sizing:border-box;"></div><span class="t" style="left:12px;top:227px;"><i class="u">GPO</i>14</span><div style="left:98px;top:225px;width:72px;height:16px;border-right:1px solid #A8A8A8;box-sizing:border-box;"></div><div style="left:169px;top:225px;width:143px;height:16px;border-right:1px solid #A8A8A8;box-sizing:border-box;"></div><span class="t" style="left:171px;top:227px;"><i class="u">GOODX</i></span><div style="left:311px;top:225px;width:54px;height:16px;border-right:1px solid #A8A8A8;box-sizing:border-box;"></div><span class="t" style="left:313px;top:227px;"><i class="u">S</i></span><div style="left:364px;top:225px;width:135px;height:16px;border-right:1px solid #A8A8A8;box-sizing:border-box;"></div><span class="t" style="left:366px;top:227px;"><i class="u">DISCOVERY</i></span><div style="left:498px;top:225px;width:90px;height:16px;border-right:1px solid #A8A8A8;box-sizing:border-box;"></div><span class="t" style="left:500px;top:227px;"><i class="d">...</i></span><div style="left:587px;top:225px;width:107px;height:16px;border-right:1px solid #A8A8A8;box-sizing:border-box;"></div><span class="t" style="left:589px;top:227px;">121 <i class="u">ANYWHERE</i></span><div style="left:693px;top:225px;width:81px;height:16px;border-right:1px solid #A8A8A8;box-sizing:border-box;"></div><span class="t r" style="left:693px;top:227px;width:77px;text-align:right;">0.00</span><div style="left:773px;top:225px;width:54px;height:16px;border-right:1px solid #A8A8A8;box-sizing:border-box;"></div><span class="t" style="left:775px;top:227px;"><i class="u">NORMAAL</i></span><div style="left:826px;top:225px;width:65px;height:16px;border-right:1px solid #A8A8A8;box-sizing:border-box;"></div><span class="t" style="left:828px;top:227px;">111111</span><div style="left:10px;top:241px;width:880px;height:16px;background:#F8FCF8;border-bottom:1px solid #A8A8A8;box-sizing:border-box;"></div><div style="left:0;top:241px;width:11px;height:16px;background:#D2D0C8;border-right:1px solid #000;border-bottom:1px solid #808080;box-sizing:border-box;"></div><div style="left:10px;top:241px;width:89px;height:16px;border-right:1px solid #A8A8A8;box-sizing:border-box;"></div><span class="t" style="left:12px;top:243px;"><i class="u">GPO</i>15</span><div style="left:98px;top:241px;width:72px;height:16px;border-right:1px solid #A8A8A8;box-sizing:border-box;"></div><span class="t" style="left:100px;top:243px;">00045</span><div style="left:169px;top:241px;width:143px;height:16px;border-right:1px solid #A8A8A8;box-sizing:border-box;"></div><span class="t" style="left:171px;top:243px;"><i class="u">GOODX</i></span><div style="left:311px;top:241px;width:54px;height:16px;border-right:1px solid #A8A8A8;box-sizing:border-box;"></div><span class="t" style="left:313px;top:243px;"><i class="u">TA</i></span><div style="left:364px;top:241px;width:135px;height:16px;border-right:1px solid #A8A8A8;box-sizing:border-box;"></div><span class="t" style="left:366px;top:243px;"><i class="u">BESTMED</i></span><div style="left:498px;top:241px;width:90px;height:16px;border-right:1px solid #A8A8A8;box-sizing:border-box;"></div><span class="t" style="left:500px;top:243px;"><i class="d">...</i></span><div style="left:587px;top:241px;width:107px;height:16px;border-right:1px solid #A8A8A8;box-sizing:border-box;"></div><span class="t" style="left:589px;top:243px;">121 <i class="u">ANYWHERE</i></span><div style="left:693px;top:241px;width:81px;height:16px;border-right:1px solid #A8A8A8;box-sizing:border-box;"></div><span class="t r" style="left:693px;top:243px;width:77px;text-align:right;">0.00</span><div style="left:773px;top:241px;width:54px;height:16px;border-right:1px solid #A8A8A8;box-sizing:border-box;"></div><span class="t" style="left:775px;top:243px;"><i class="u">NORMAAL</i></span><div style="left:826px;top:241px;width:65px;height:16px;border-right:1px solid #A8A8A8;box-sizing:border-box;"></div><span class="t" style="left:828px;top:243px;">111111</span><div style="left:10px;top:257px;width:880px;height:16px;background:#F8FCF8;border-bottom:1px solid #A8A8A8;box-sizing:border-box;"></div><div style="left:0;top:257px;width:11px;height:16px;background:#D2D0C8;border-right:1px solid #000;border-bottom:1px solid #808080;box-sizing:border-box;"></div><div style="left:10px;top:257px;width:89px;height:16px;border-right:1px solid #A8A8A8;box-sizing:border-box;"></div><span class="t" style="left:12px;top:259px;"><i class="u">GPO</i>16</span><div style="left:98px;top:257px;width:72px;height:16px;border-right:1px solid #A8A8A8;box-sizing:border-box;"></div><div style="left:169px;top:257px;width:143px;height:16px;border-right:1px solid #A8A8A8;box-sizing:border-box;"></div><span class="t" style="left:171px;top:259px;"><i class="u">GOODX</i></span><div style="left:311px;top:257px;width:54px;height:16px;border-right:1px solid #A8A8A8;box-sizing:border-box;"></div><span class="t" style="left:313px;top:259px;"><i class="u">K</i></span><div style="left:364px;top:257px;width:135px;height:16px;border-right:1px solid #A8A8A8;box-sizing:border-box;"></div><span class="t" style="left:366px;top:259px;"><i class="u">DISCOVERY</i></span><div style="left:498px;top:257px;width:90px;height:16px;border-right:1px solid #A8A8A8;box-sizing:border-box;"></div><span class="t" style="left:500px;top:259px;"><i class="d">...</i></span><div style="left:587px;top:257px;width:107px;height:16px;border-right:1px solid #A8A8A8;box-sizing:border-box;"></div><span class="t" style="left:589px;top:259px;">121 <i class="u">ANYWHERE</i></span><div style="left:693px;top:257px;width:81px;height:16px;border-right:1px solid #A8A8A8;box-sizing:border-box;"></div><span class="t r" style="left:693px;top:259px;width:77px;text-align:right;">0.00</span><div style="left:773px;top:257px;width:54px;height:16px;border-right:1px solid #A8A8A8;box-sizing:border-box;"></div><span class="t" style="left:775px;top:259px;"><i class="u">NORMAAL</i></span><div style="left:826px;top:257px;width:65px;height:16px;border-right:1px solid #A8A8A8;box-sizing:border-box;"></div><span class="t" style="left:828px;top:259px;">111111</span><div style="left:10px;top:273px;width:880px;height:16px;background:#F8FCF8;border-bottom:1px solid #A8A8A8;box-sizing:border-box;"></div><div style="left:0;top:273px;width:11px;height:16px;background:#D2D0C8;border-right:1px solid #000;border-bottom:1px solid #808080;box-sizing:border-box;"></div><div style="left:10px;top:273px;width:89px;height:16px;border-right:1px solid #A8A8A8;box-sizing:border-box;"></div><span class="t" style="left:12px;top:275px;"><i class="u">GPO</i>17</span><div style="left:98px;top:273px;width:72px;height:16px;border-right:1px solid #A8A8A8;box-sizing:border-box;"></div><div style="left:169px;top:273px;width:143px;height:16px;border-right:1px solid #A8A8A8;box-sizing:border-box;"></div><span class="t" style="left:171px;top:275px;"><i class="u">GOODX</i></span><div style="left:311px;top:273px;width:54px;height:16px;border-right:1px solid #A8A8A8;box-sizing:border-box;"></div><span class="t" style="left:313px;top:275px;"><i class="u">K</i></span><div style="left:364px;top:273px;width:135px;height:16px;border-right:1px solid #A8A8A8;box-sizing:border-box;"></div><span class="t" style="left:366px;top:275px;"><i class="u">DISCOVERY</i></span><div style="left:498px;top:273px;width:90px;height:16px;border-right:1px solid #A8A8A8;box-sizing:border-box;"></div><span class="t" style="left:500px;top:275px;"><i class="d">...</i></span><div style="left:587px;top:273px;width:107px;height:16px;border-right:1px solid #A8A8A8;box-sizing:border-box;"></div><span class="t" style="left:589px;top:275px;">121 <i class="u">ANYWHERE</i></span><div style="left:693px;top:273px;width:81px;height:16px;border-right:1px solid #A8A8A8;box-sizing:border-box;"></div><span class="t r" style="left:693px;top:275px;width:77px;text-align:right;">0.00</span><div style="left:773px;top:273px;width:54px;height:16px;border-right:1px solid #A8A8A8;box-sizing:border-box;"></div><span class="t" style="left:775px;top:275px;"><i class="u">NORMAAL</i></span><div style="left:826px;top:273px;width:65px;height:16px;border-right:1px solid #A8A8A8;box-sizing:border-box;"></div><span class="t" style="left:828px;top:275px;">111111</span></div><div style="left:896px;top:144px;width:14px;height:283px;background-color:#eeeae6;background-image:repeating-conic-gradient(#D2D0C8 0 25%, #ffffff 0 50%);background-size:2px 2px;"></div><div style="left:896px;top:144px;width:14px;height:14px;background:#D2D0C8;border:1px solid #202020;box-shadow:inset 1px 1px 0 #fff;box-sizing:border-box;"></div><svg style="position:absolute;left:899px;top:149px" width="8" height="5"><path d="M0 4 L3.5 0 L7 4 Z" fill="#000"/></svg><div style="left:896px;top:158px;width:14px;height:1px;background:#000;"></div><div style="left:896px;top:159px;width:14px;height:16px;background:#D2D0C8;border:1px solid #202020;box-shadow:inset 1px 1px 0 #fff;box-sizing:border-box;"></div><div style="left:896px;top:413px;width:14px;height:14px;background:#D2D0C8;border:1px solid #202020;box-shadow:inset 1px 1px 0 #fff;box-sizing:border-box;"></div><svg style="position:absolute;left:899px;top:418px" width="8" height="5"><path d="M0 0 L3.5 4 L7 0 Z" fill="#000"/></svg><div style="left:5px;top:427px;width:891px;height:14px;background-image:repeating-conic-gradient(#D2D0C8 0 25%, #ffffff 0 50%);background-size:2px 2px;"></div><div style="left:5px;top:427px;width:14px;height:14px;background:#D2D0C8;border:1px solid #202020;box-shadow:inset 1px 1px 0 #fff;box-sizing:border-box;"></div><svg style="position:absolute;left:10px;top:431px" width="5" height="8"><path d="M4 0 L0 3.5 L4 7 Z" fill="#000"/></svg><div style="left:20px;top:427px;width:555px;height:14px;background:#B2BED2;border:1px solid #1a2a6a;box-sizing:border-box;"></div><div style="left:882px;top:427px;width:14px;height:14px;background:#D2D0C8;border:1px solid #202020;box-shadow:inset 1px 1px 0 #fff;box-sizing:border-box;"></div><svg style="position:absolute;left:887px;top:430px" width="5" height="8"><path d="M0 0 L4 3.5 L0 7 Z" fill="#000"/></svg><div style="left:896px;top:427px;width:14px;height:14px;background:#D2D0C8;"></div><div style="left:5px;top:442px;width:906px;height:4px;background:#000080;"></div><div style="left:5px;top:446px;width:906px;height:123px;overflow:hidden;background:#F8FCF8;border-bottom:1px solid #808080;border-left:1px solid #404040;border-top:1px solid #8a8a8a;box-sizing:border-box;"><div style="left:0;top:0;width:823px;height:16px;background:#D2D0C8;border-bottom:1px solid #404040;box-sizing:border-box;"></div><div style="left:0;top:0;width:11px;height:16px;background:#D2D0C8;border-right:1px solid #000;box-sizing:border-box;"></div><svg style="position:absolute;left:2px;top:3px" width="8" height="10"><g fill="#303030"><rect x="0" y="0" width="1" height="1"/><rect x="2" y="0" width="5" height="1"/><rect x="0" y="2" width="1" height="1"/><rect x="2" y="2" width="5" height="1"/><rect x="0" y="4" width="1" height="1"/><rect x="2" y="4" width="5" height="1"/><rect x="0" y="6" width="1" height="1"/><rect x="2" y="6" width="5" height="1"/><rect x="0" y="8" width="1" height="1"/><rect x="2" y="8" width="5" height="1"/></g></svg><div style="left:10px;top:0;width:80px;height:16px;border-right:1px solid #404040;box-sizing:border-box;"></div><span class="t" style="left:12px;top:3px;"><i class="u">P</i>atient <i class="u">N</i>umber</span><div style="left:89px;top:0;width:41px;height:16px;border-right:1px solid #404040;box-sizing:border-box;"></div><span class="t" style="left:91px;top:3px;"><i class="u">G</i>ender</span><div style="left:129px;top:0;width:179px;height:16px;border-right:1px solid #404040;box-sizing:border-box;"></div><span class="t" style="left:131px;top:3px;"><i class="u">P</i>atient <i class="u">N</i>ame</span><div style="left:307px;top:0;width:178px;height:16px;border-right:1px solid #404040;box-sizing:border-box;"></div><span class="t" style="left:309px;top:3px;"><i class="u">P</i>atient <i class="u">S</i>urname</span><div style="left:484px;top:0;width:90px;height:16px;border-right:1px solid #404040;box-sizing:border-box;"></div><span class="t" style="left:486px;top:3px;"><i class="u">D</i>ate <i class="u">O</i>f <i class="u">B</i>irth</span><div style="left:573px;top:0;width:55px;height:16px;border-right:1px solid #404040;box-sizing:border-box;"></div><span class="t" style="left:575px;top:3px;"><i class="u">D</i>ep.<i class="u">N</i>o.</span><div style="left:627px;top:0;width:89px;height:16px;border-right:1px solid #404040;box-sizing:border-box;"></div><span class="t" style="left:629px;top:3px;"><i class="u">F</i>ile <i class="u">N</i>o.</span><div style="left:715px;top:0;width:55px;height:16px;border-right:1px solid #404040;box-sizing:border-box;"></div><span class="t" style="left:717px;top:3px;"><i class="u">L</i>ength</span><div style="left:769px;top:0;width:54px;height:16px;border-right:1px solid #404040;box-sizing:border-box;"></div><span class="t" style="left:771px;top:3px;"><i class="u">W</i>eight</span><div style="left:10px;top:16px;width:812px;height:17px;background:#D2D0C8;border-bottom:1px solid #808080;box-sizing:border-box;"></div><div style="left:0;top:16px;width:11px;height:17px;background:#D2D0C8;border-right:1px solid #000;border-bottom:1px solid #404040;box-sizing:border-box;"></div><svg style="position:absolute;left:2px;top:20px" width="6" height="10"><path d="M1 0 L5 4.5 L1 9 Z" fill="#000"/></svg><div style="left:10px;top:16px;width:80px;height:17px;border-right:1px solid #A0A0A0;box-sizing:border-box;"></div><span class="t" style="left:12px;top:19px;color:#000;">000000101</span><div style="left:89px;top:16px;width:41px;height:17px;border-right:1px solid #A0A0A0;box-sizing:border-box;"></div><div style="left:129px;top:16px;width:179px;height:17px;border-right:1px solid #A0A0A0;box-sizing:border-box;"></div><span class="t" style="left:131px;top:19px;color:#000;"><i class="u">M</i>eneer</span><div style="left:307px;top:16px;width:178px;height:17px;border-right:1px solid #A0A0A0;box-sizing:border-box;"></div><span class="t" style="left:309px;top:19px;color:#000;"><i class="u">G</i>ood<i class="u">X</i></span><div style="left:484px;top:16px;width:90px;height:17px;border-right:1px solid #A0A0A0;box-sizing:border-box;"></div><span class="t" style="left:486px;top:19px;color:#000;">11-11-2011</span><div style="left:573px;top:16px;width:55px;height:17px;border-right:1px solid #A0A0A0;box-sizing:border-box;"></div><span class="t" style="left:575px;top:19px;color:#000;">00</span><div style="left:627px;top:16px;width:89px;height:17px;border-right:1px solid #A0A0A0;box-sizing:border-box;"></div><span class="t" style="left:629px;top:19px;color:#000;"><i class="u">FILENR</i></span><div style="left:715px;top:16px;width:55px;height:17px;border-right:1px solid #A0A0A0;box-sizing:border-box;"></div><span class="t" style="left:717px;top:19px;color:#000;">0</span><div style="left:769px;top:16px;width:54px;height:17px;border-right:1px solid #A0A0A0;box-sizing:border-box;"></div><span class="t" style="left:771px;top:19px;color:#000;">0</span><svg style="position:absolute;left:90px;top:17px" width="17" height="15"><path d="M9.5 5.5 L13 2" stroke="#a8c8f0" stroke-width="2.2"/><path d="M10 1 H16 V7 Z" fill="#b8d4f4" stroke="#88a8e0" stroke-width="0.8"/><circle cx="8" cy="9" r="4.3" fill="none" stroke="#8cb0e8" stroke-width="2.6"/><circle cx="8" cy="9" r="4.3" fill="none" stroke="#c8dcf8" stroke-width="1"/><circle cx="8" cy="9" r="1" fill="#fff"/></svg><div style="left:10px;top:33px;width:812px;height:17px;background:#F8FCF8;border-bottom:1px solid #A0A0A0;box-sizing:border-box;"></div><div style="left:0;top:33px;width:11px;height:17px;background:#D2D0C8;border-right:1px solid #000;border-bottom:1px solid #404040;box-sizing:border-box;"></div><div style="left:10px;top:33px;width:80px;height:17px;border-right:1px solid #A0A0A0;box-sizing:border-box;"></div><span class="t" style="left:12px;top:36px;color:#F070C8;">000000102</span><div style="left:89px;top:33px;width:41px;height:17px;border-right:1px solid #A0A0A0;box-sizing:border-box;"></div><div style="left:129px;top:33px;width:179px;height:17px;border-right:1px solid #A0A0A0;box-sizing:border-box;"></div><span class="t" style="left:131px;top:36px;color:#F070C8;"><i class="u">MEVROU</i></span><div style="left:307px;top:33px;width:178px;height:17px;border-right:1px solid #A0A0A0;box-sizing:border-box;"></div><span class="t" style="left:309px;top:36px;color:#F070C8;"><i class="u">G</i>ood<i class="u">X</i></span><div style="left:484px;top:33px;width:90px;height:17px;border-right:1px solid #A0A0A0;box-sizing:border-box;"></div><span class="t" style="left:486px;top:36px;color:#F070C8;">12-08-1983</span><div style="left:573px;top:33px;width:55px;height:17px;border-right:1px solid #A0A0A0;box-sizing:border-box;"></div><span class="t" style="left:575px;top:36px;color:#F070C8;">01</span><div style="left:627px;top:33px;width:89px;height:17px;border-right:1px solid #A0A0A0;box-sizing:border-box;"></div><div style="left:715px;top:33px;width:55px;height:17px;border-right:1px solid #A0A0A0;box-sizing:border-box;"></div><div style="left:769px;top:33px;width:54px;height:17px;border-right:1px solid #A0A0A0;box-sizing:border-box;"></div><svg style="position:absolute;left:91px;top:33px" width="16" height="17"><circle cx="8.5" cy="7" r="4.2" fill="none" stroke="#e4a0e8" stroke-width="2.4"/><circle cx="8.5" cy="7" r="4.2" fill="none" stroke="#f8d8f8" stroke-width="0.8"/><path d="M8.5 11 V16 M5.5 13.5 L8.5 16 L11.5 13.5" stroke="#d878d8" stroke-width="2" fill="none"/></svg></div><div style="left:296px;top:578px;width:93px;height:35px;background:#D2D0C8;border:1px solid #101010;box-shadow:inset 0 -1px 0 #808080, inset -1px 0 0 #a0a0a0;box-sizing:border-box;"></div><span class="t " style="left:330px;top:590px;"><i class="u">V</i>alidation</span><div style="left:391px;top:578px;width:92px;height:35px;background:#D2D0C8;border:1px solid #101010;box-shadow:inset 0 -1px 0 #808080, inset -1px 0 0 #a0a0a0;box-sizing:border-box;"></div><span class="t " style="left:419px;top:590px;"><i class="u">O</i>ptions (<i class="u">F</i>8)</span><div style="left:486px;top:578px;width:94px;height:35px;background:#D2D0C8;border:2px solid #000;box-shadow:inset -1px -1px 0 #808080;box-sizing:border-box;"><div style="left:1px;top:1px;width:88px;height:1px;background:repeating-linear-gradient(90deg,#303030 0 1px,transparent 1px 2px);"></div><div style="left:1px;top:29px;width:88px;height:1px;background:repeating-linear-gradient(90deg,#303030 0 1px,transparent 1px 2px);"></div><div style="left:1px;top:1px;width:1px;height:29px;background:repeating-linear-gradient(180deg,#303030 0 1px,transparent 1px 2px);"></div><div style="left:88px;top:1px;width:1px;height:29px;background:repeating-linear-gradient(180deg,#303030 0 1px,transparent 1px 2px);"></div></div><span class="t " style="left:513px;top:590px;"><i class="u">A</i>ccount (<i class="u">F</i>9)</span><div style="left:583px;top:578px;width:91px;height:35px;background:#D2D0C8;border:1px solid #101010;box-shadow:inset 0 -1px 0 #808080, inset -1px 0 0 #a0a0a0;box-sizing:border-box;"></div><span class="t " style="left:605px;top:590px;"><i class="u">P</i>atients (<i class="u">F</i>11)</span><div style="left:708px;top:578px;width:93px;height:35px;background:#D2D0C8;border:1px solid #101010;box-shadow:inset 0 -1px 0 #808080, inset -1px 0 0 #a0a0a0;box-sizing:border-box;"></div><span class="t " style="left:746px;top:590px;"><i class="u">OK</i> (<i class="u">F</i>2)</span><div style="left:803px;top:578px;width:93px;height:35px;background:#D2D0C8;border:1px solid #101010;box-shadow:inset 0 -1px 0 #808080, inset -1px 0 0 #a0a0a0;box-sizing:border-box;"></div><span class="t " style="left:837px;top:590px;"><i class="u">E</i>xit (<i class="u">F</i>10)</span><svg style="position:absolute;left:312px;top:588px" width="15" height="15"><path d="M1 1 H14 V11 H6 L3 14 V11 H1 Z" fill="#eef4fa" stroke="#b8c8d8"/><text x="5" y="9" font-size="8" font-family="Liberation Sans" fill="#333">?</text></svg><svg style="position:absolute;left:400px;top:588px" width="15" height="14"><rect x="2" y="1" width="10" height="2" fill="#c8e8c8"/><rect x="1" y="5" width="12" height="3" fill="#2a4aa8"/><rect x="2" y="10" width="10" height="2" fill="#c8e8c8"/><rect x="12" y="7" width="2" height="2" fill="#2a4aa8"/></svg><svg style="position:absolute;left:497px;top:589px" width="12" height="13"><rect x="0.5" y="0.5" width="10.5" height="12" fill="#e6e6e6" stroke="#9a9a9a"/><rect x="2" y="2" width="7.5" height="3" fill="#5a8ae0"/><g fill="#b8b8b8"><rect x="2" y="6.5" width="1.5" height="1"/><rect x="5" y="6.5" width="1.5" height="1"/><rect x="2" y="8.5" width="1.5" height="2"/><rect x="5" y="8.5" width="1.5" height="2"/><rect x="8" y="8.5" width="1.5" height="2"/></g><rect x="7.8" y="6" width="2" height="1.6" fill="#e06060"/></svg><svg style="position:absolute;left:589px;top:589px" width="13" height="14"><rect x="0" y="4" width="6" height="6" fill="#52b018"/><rect x="0" y="0" width="11" height="3" fill="#3a3430"/><rect x="1" y="2" width="3" height="3" fill="#d8c4b0"/><rect x="5" y="2" width="5" height="5" fill="#d8c0a8"/><rect x="5" y="0.5" width="6" height="2" fill="#2e2a26"/><path d="M3 8 H7 L8 9 L10 7 H13 V14 H3 Z" fill="#2080c8"/></svg><svg style="position:absolute;left:730px;top:589px" width="13" height="13"><defs><linearGradient id="gok" x1="0" y1="0" x2="1" y2="1"><stop offset="0" stop-color="#5cc05c"/><stop offset="1" stop-color="#08a008"/></linearGradient></defs><rect x="0" y="0" width="13" height="13" rx="2" fill="url(#gok)"/><path d="M2.5 6.5 H9.5 M6.5 3 L10 6.5 L6.5 10" stroke="#fff" stroke-width="2" fill="none"/></svg><svg style="position:absolute;left:820px;top:589px" width="14" height="14"><defs><linearGradient id="gex" x1="0" y1="0" x2="0" y2="1"><stop offset="0" stop-color="#e07a7a"/><stop offset="1" stop-color="#c01818"/></linearGradient></defs><circle cx="7" cy="7" r="7" fill="url(#gex)"/><path d="M5 5 L9 9 M9 5 L5 9" stroke="#fff" stroke-width="2"/></svg><div style="left:481px;top:572px;width:103px;height:45px;border:3px solid #FF0000;box-sizing:border-box;"></div><div style="left:12px;top:333px;width:887px;height:22px;border:3px solid #FF0000;box-sizing:border-box;"></div><div style="left:0px;top:626px;width:916px;height:15px;background:#D2D0C8;"></div><div style="left:1px;top:627px;width:178px;height:12px;border-top:1px solid #808080;border-left:1px solid #808080;border-right:1px solid #fff;border-bottom:1px solid #fff;box-sizing:border-box;"></div><span class="t " style="left:3px;top:628px;"><i class="u">F</i>ull</span><div style="left:180px;top:627px;width:132px;height:12px;border-top:1px solid #808080;border-left:1px solid #808080;border-right:1px solid #fff;border-bottom:1px solid #fff;box-sizing:border-box;"></div><span class="t " style="left:182px;top:628px;"><i class="u">R</i>ecord(s) : 237</span><div style="left:313px;top:627px;width:602px;height:12px;border-top:1px solid #808080;border-left:1px solid #808080;border-right:1px solid #fff;border-bottom:1px solid #fff;box-sizing:border-box;"></div><span class="t " style="left:315px;top:628px;">22 ms</span>
</body></html>
